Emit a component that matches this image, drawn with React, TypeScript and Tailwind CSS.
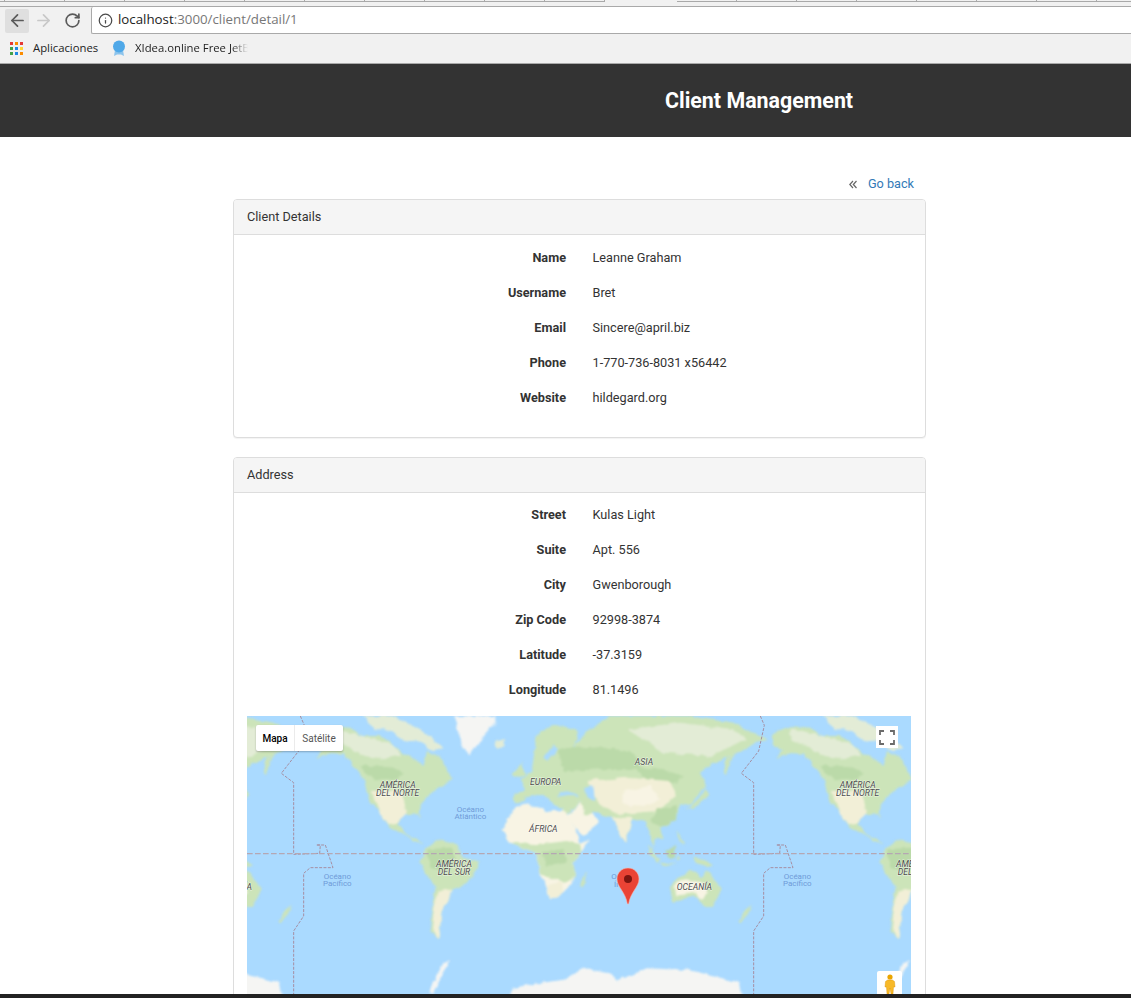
import { ArrowLeft, ArrowRight, RotateCw, Info } from "lucide-react";

const CLIENT_ROWS = [
  ["Name", "Leanne Graham"],
  ["Username", "Bret"],
  ["Email", "Sincere@april.biz"],
  ["Phone", "1-770-736-8031 x56442"],
  ["Website", "hildegard.org"],
];

const ADDRESS_ROWS = [
  ["Street", "Kulas Light"],
  ["Suite", "Apt. 556"],
  ["City", "Gwenborough"],
  ["Zip Code", "92998-3874"],
  ["Latitude", "-37.3159"],
  ["Longitude", "81.1496"],
];

const APP_DOTS = [
  "bg-[#e53935]", "bg-[#fb8c00]", "bg-[#e53935]",
  "bg-[#43a047]", "bg-[#1e88e5]", "bg-[#fdd835]",
  "bg-[#43a047]", "bg-[#1e88e5]", "bg-[#fb8c00]",
];

const WATER = "#aadaff";
const TAN = "#f2efd7";
const CREAM = "#f8f4e4";
const GREEN = "#cce4b9";
const DARK = "#bbdaa9";
const PALE = "#e3ecd6";
const SNOW = "#f5f5f3";

// [fill, points], map units are 3x page pixels, one world is 1380 wide
const LAND: [string, string][] = [
  // north america
  [GREEN, "195,55 250,30 310,35 345,60 400,60 440,85 465,110 500,130 530,150 540,105 575,120 600,160 615,190 585,210 560,225 530,250 515,290 525,310 510,295 470,295 455,320 470,350 500,365 530,380 510,378 470,355 430,335 400,290 370,265 355,210 330,160 290,115 240,110 205,130 230,100 195,85"],
  [PALE, "250,35 345,60 440,85 465,120 420,130 350,120 300,90 250,70"],
  [DARK, "340,150 420,150 470,170 450,190 380,190"],
  [TAN, "372,225 470,225 480,290 450,320 425,325 395,285"],
  [PALE, "350,0 430,0 500,30 560,70 590,100 560,105 510,70 470,75 420,40 380,40"],
  [SNOW, "620,0 745,0 745,25 710,60 670,115 650,100 635,50"],
  [PALE, "740,80 775,72 770,90 750,95"],
  // south america
  [GREEN, "520,440 535,395 570,372 630,385 650,425 695,440 680,480 650,505 620,520 589,572 574,667 549,642 559,572 569,512 524,462"],
  [DARK, "540,400 610,395 630,440 590,470 550,450"],
  [TAN, "575,525 620,520 589,572 574,667 555,640 562,572"],
  // africa and arabia
  [CREAM, "767,340 794,285 844,262 899,285 959,285 984,340 999,385 1027,370 1004,410 979,440 984,480 949,530 909,553 894,500 874,470 874,415 829,400 784,380"],
  [GREEN, "784,380 880,385 960,375 999,385 1004,410 979,440 984,480 950,500 890,480 874,470 874,415 829,400"],
  [DARK, "885,405 950,400 960,440 900,450"],
  [TAN, "900,510 945,500 949,530 909,553"],
  [GREEN, "999,510 1024,463 1014,505 1004,515"],
  [CREAM, "964,300 999,255 1029,290 1059,320 1009,360 984,340"],
  // eurasia
  [GREEN, "799,255 804,232 834,225 824,190 854,170 859,130 869,60 919,25 984,40 989,70 974,100 1029,40 1089,0 1319,0 1459,20 1559,70 1519,85 1459,115 1429,180 1449,120 1399,140 1359,170 1379,210 1329,265 1299,270 1289,310 1239,340 1254,370 1229,365 1209,400 1237,440 1225,435 1199,320 1159,310 1134,380 1094,305 1054,290 1019,300 999,255 964,295 924,265 889,240 849,240 819,262"],
  [DARK, "930,100 1060,90 1160,110 1180,160 1060,160 950,165"],
  [DARK, "1159,150 1260,165 1310,180 1290,200 1200,190"],
  [PALE, "1140,40 1300,20 1460,40 1500,70 1390,120 1250,110"],
  [TAN, "1020,195 1140,185 1270,195 1290,240 1230,285 1120,295 1060,270 1035,225"],
  [CREAM, "1130,225 1210,210 1240,250 1190,270 1130,265"],
  [TAN, "1094,305 1159,305 1134,380"],
  [DARK, "1230,280 1290,270 1290,310 1240,335 1210,310"],
  [WATER, "1014,215 1039,210 1044,255 1021,240"],
  [WATER, "934,240 994,240 979,230 939,228"],
  [WATER, "888,130 920,85 930,100 905,135"],
  [WATER, "829,245 880,248 905,262 860,258"],
  // islands
  [GREEN, "794,175 824,140 834,180 804,185"],
  [GREEN, "1379,215 1384,240 1339,275 1314,280 1350,255"],
  [GREEN, "1439,120 1454,130 1439,180 1431,165"],
  [GREEN, "1204,390 1239,430 1229,440 1204,405"],
  [GREEN, "1239,437 1289,445 1249,447"],
  [DARK, "1254,405 1284,390 1284,425 1264,425"],
  [GREEN, "1294,415 1304,430 1289,435"],
  [GREEN, "1289,345 1314,385 1304,385 1289,360"],
  [GREEN, "1339,420 1404,445 1379,450 1344,440"],
  [GREEN, "1474,612 1514,567 1504,592 1484,617"],
  // australia
  [GREEN, "1269,510 1304,480 1334,460 1364,485 1379,460 1424,520 1399,570 1369,570 1349,540 1279,555 1274,540"],
  [CREAM, "1280,510 1310,490 1360,495 1385,530 1365,550 1345,530 1285,540"],
  // antarctica
  [SNOW, "769,905 800,815 870,802 960,790 1000,757 1089,772 1109,797 1199,757 1329,762 1479,802 1495,905"],
  [SNOW, "609,732 585,745 570,775 550,830 562,835 580,785"],
];

const BIG_LABELS: [string, number, number][] = [
  ["AMÉRICA", 452, 216],
  ["DEL NORTE", 452, 241],
  ["AMÉRICA", 621, 452],
  ["DEL SUR", 621, 478],
  ["EUROPA", 896, 206],
  ["ÁFRICA", 889, 349],
  ["ASIA", 1191, 147],
  ["OCEANÍA", 1342, 522],
];

const SEA_LABELS: [string, number, number][] = [
  ["Océano", 670, 287],
  ["Atlántico", 670, 309],
  ["Océano", 271, 489],
  ["Pacífico", 271, 511],
  ["Océano", 1134, 490],
  ["Índico", 1134, 513],
];

const MAP_W = 1992;
const inView = (x: number) => x > -70 && x < MAP_W + 70;

function World({ dx }: { dx: number }) {
  return (
    <g transform={`translate(${dx} 0)`}>
      <g filter="url(#rough)">
        {LAND.map(([fill, points], i) => (
          <polygon key={i} fill={fill} points={points} />
        ))}
      </g>
      {/* date line */}
      <polyline
        fill="none"
        stroke="#a58fa3"
        strokeWidth="3"
        strokeDasharray="9 4"
        points="160,0 172,28 155,105 103,172 140,200 140,415 218,412 220,387 208,387 235,387 258,455 190,455 170,472 170,600 140,645 140,900"
      />
    </g>
  );
}

function MapLabels() {
  const offsets = [-1380, 0, 1380];
  return (
    <>
      <g fontFamily="Roboto, sans-serif" fontSize="26" fontStyle="italic" textAnchor="middle" fill="#4d4d4d" stroke="#ffffff" strokeOpacity="0.6" strokeWidth="3" paintOrder="stroke">
        {offsets.flatMap((o) =>
          BIG_LABELS.filter(([, x]) => inView(x + o)).map(([t, x, y]) => (
            <text key={`${o}-${t}-${x}-${y}`} x={x + o} y={y}>{t}</text>
          ))
        )}
      </g>
      <g fontFamily="Roboto, sans-serif" fontSize="24" textAnchor="middle" fill="#6f9bd8">
        {offsets.flatMap((o) =>
          SEA_LABELS.filter(([, x]) => inView(x + o)).map(([t, x, y]) => (
            <text key={`${o}-${t}-${x}-${y}`} x={x + o} y={y}>{t}</text>
          ))
        )}
      </g>
    </>
  );
}

function MapView() {
  return (
    <div className="relative mt-[9px] h-[300px] w-[664px] overflow-hidden bg-[#aadaff]">
      <svg viewBox="0 0 1992 900" className="block h-[300px] w-[664px]">
        <defs>
          <filter id="rough" filterUnits="userSpaceOnUse" x="-100" y="-100" width="1800" height="1100" colorInterpolationFilters="sRGB">
            <feTurbulence type="fractalNoise" baseFrequency="0.035" numOctaves="3" seed="4" result="n" />
            <feDisplacementMap in="SourceGraphic" in2="n" scale="18" xChannelSelector="R" yChannelSelector="G" />
            <feGaussianBlur stdDeviation="2.4" />
          </filter>
        </defs>
        <World dx={-1380} />
        <World dx={0} />
        <World dx={1380} />
        <line x1="0" y1="413" x2="1992" y2="413" stroke="#b5a7b3" strokeWidth="3.5" strokeDasharray="17 7" />
        <MapLabels />
      </svg>

      <div className="absolute left-[9px] top-[9px] flex h-[26px] items-center rounded-[2px] bg-white font-['Roboto',sans-serif] text-[10px] shadow-[0_1px_2px_rgba(0,0,0,0.25)]">
        <div className="flex h-full w-[39px] items-center justify-center border-r border-[#ebebeb] font-medium text-black">Mapa</div>
        <div className="flex h-full w-[48px] items-center justify-center text-[#565656]">Satélite</div>
      </div>

      <div className="absolute left-[629px] top-[10px] flex h-[22px] w-[22px] items-center justify-center bg-white">
        <svg width="16" height="15" viewBox="0 0 16 15" fill="none" stroke="#6b6b6b" strokeWidth="1.800">
          <path d="M1 5V1h4M11 1h4v4M15 10v4h-4M5 14H1v-4" />
        </svg>
      </div>

      <svg width="24" height="38" viewBox="0 0 24 38" className="absolute left-[369px] top-[151px]">
        <path d="M12 1C5.800 1 1 5.800 1 12c0 8 8.600 13 10.400 25h1.200C14.400 25 23 20 23 12 23 5.800 18.200 1 12 1z" fill="#ea4335" stroke="#f7b7b0" strokeWidth="0.600" />
        <circle cx="12" cy="12" r="4" fill="#7d1510" />
      </svg>

      <div className="absolute left-[630px] top-[255px] flex h-[28px] w-[25px] items-start justify-center rounded-[2px] bg-white pt-[3px]">
        <svg width="12" height="20" viewBox="0 0 12 20">
          <circle cx="6" cy="3" r="2.600" fill="#eaa500" />
          <path d="M3.500 6h5l2 1.500L11 13H9.500L9 20H7l-1-6-1 6H3l-.5-7H1l.5-5.500z" fill="#f7b928" stroke="#d98f00" strokeWidth="0.400" />
        </svg>
      </div>
    </div>
  );
}

function InfoRows({ rows }: { rows: string[][] }) {
  return (
    <>
      {rows.map(([label, value]) => (
        <div key={label} className="flex h-[35px] items-center gap-[26.5px]">
          <div className="w-[319px] text-right font-bold">{label}</div>
          <div>{value}</div>
        </div>
      ))}
    </>
  );
}

function Panel({ title, className, children }: { title: string; className: string; children: React.ReactNode }) {
  return (
    <div className={`rounded-[4px] border border-[#dddddd] bg-white shadow-[0_1px_1px_rgba(0,0,0,0.05)] ${className}`}>
      <div className="flex h-[35px] items-center rounded-t-[3px] border-b border-[#dddddd] bg-[#f5f5f5] px-[13px]">{title}</div>
      {children}
    </div>
  );
}

export default function App() {
  return (
    <div className="flex h-[998px] w-[1131px] flex-col overflow-hidden bg-white font-['Roboto',sans-serif] text-[12.7px] text-[#333333]">
      {/* tab strip bottom edge */}
      <div className="flex h-[7px] shrink-0 overflow-hidden border-b border-[#a9a9a9] bg-[#f1f1f1]">
        <div className="h-[2px] w-[5px] shrink-0 border-b border-r border-[#a9a9a9]" />
        {[60, 60, 60, 60, 60, 60, 60, 60, 60, 60].map((w, i) => (
          <div key={i} style={{ width: w }} className="h-[2px] shrink-0 border-b border-r border-[#a9a9a9]" />
        ))}
        <div className="h-[2px] w-[72px] shrink-0" />
        {[60, 60, 60, 60, 60, 60, 60, 60].map((w, i) => (
          <div key={i} style={{ width: w }} className="h-[2px] shrink-0 border-b border-r border-[#a9a9a9]" />
        ))}
      </div>

      {/* address bar */}
      <div className="flex h-[27px] shrink-0 items-center bg-[#f1f1f1] pl-[5px]">
        <div className="flex h-[24px] w-[24px] items-center justify-center rounded-[2px] bg-[#dfdfdf]">
          <ArrowLeft size={19} strokeWidth={2.2} className="text-[#5a5a5a]" />
        </div>
        <ArrowRight size={19} strokeWidth={2.2} className="ml-[5px] text-[#c8c8c8]" />
        <RotateCw size={17} strokeWidth={2.4} className="ml-[11px] text-[#5a5a5a]" />
        <div className="ml-[10px] flex h-[27px] flex-1 items-center rounded-l-[2px] border-b border-l border-[#a9a9a9] bg-white pl-[6px] font-['Open_Sans',sans-serif] text-[13.3px]">
          <Info size={15} strokeWidth={2} className="text-[#4a4a4a]" />
          <span className="ml-[5px] text-[#222222]">localhost</span>
          <span className="text-[#777777]">:3000/client/detail/1</span>
        </div>
      </div>

      {/* bookmarks */}
      <div className="flex h-[30px] shrink-0 items-center border-b border-[#a9a9a9] bg-[#f1f1f1] pl-[10px] font-['Open_Sans',sans-serif] text-[11.3px] text-[#222222]">
        <div className="grid h-[13px] w-[13px] grid-cols-3 gap-[2px]">
          {APP_DOTS.map((c, i) => (
            <div key={i} className={c} />
          ))}
        </div>
        <span className="ml-[10px] w-[66px] whitespace-nowrap">Aplicaciones</span>
        <svg width="14" height="17" viewBox="0 0 14 17" className="ml-[13px]">
          <path d="M3 10l-1 6 3-1.500h4l3 1.500-1-6z" fill="#8cc4ec" />
          <circle cx="7" cy="6.500" r="6" fill="#4fa8e8" />
        </svg>
        <span className="ml-[9px] w-[113px] overflow-hidden whitespace-nowrap [mask-image:linear-gradient(to_right,black_85%,transparent)]">
          XIdea.online Free JetBrains
        </span>
      </div>

      <header className="flex h-[73px] shrink-0 items-center bg-[#333333] pl-[665px] pt-[2px] text-[21.4px] font-bold text-white">
        Client Management
      </header>

      <main className="ml-[233px] min-h-0 w-[693px] flex-1 overflow-hidden">
        <div className="flex h-[62px] items-end justify-end pb-[6px] pr-[12px] text-[#337ab7]">
          <svg width="8" height="9" viewBox="0 0 8 9" fill="none" stroke="#666666" strokeWidth="1.200" className="mb-[4px] mr-[10.500px]">
            <path d="M4 1L.8 4.500 4 8M7.500 1L4.300 4.500 7.500 8" />
          </svg>
          <span>Go back</span>
        </div>

        <Panel title="Client Details" className="h-[239px]">
          <div className="px-[13px] pt-[5px]">
            <InfoRows rows={CLIENT_ROWS} />
          </div>
        </Panel>

        <Panel title="Address" className="mt-[19px] h-[600px]">
          <div className="px-[13px] pt-[4px]">
            <InfoRows rows={ADDRESS_ROWS} />
            <MapView />
          </div>
        </Panel>
      </main>

      <div className="h-[4px] shrink-0 bg-[#222222]" />
    </div>
  );
}
